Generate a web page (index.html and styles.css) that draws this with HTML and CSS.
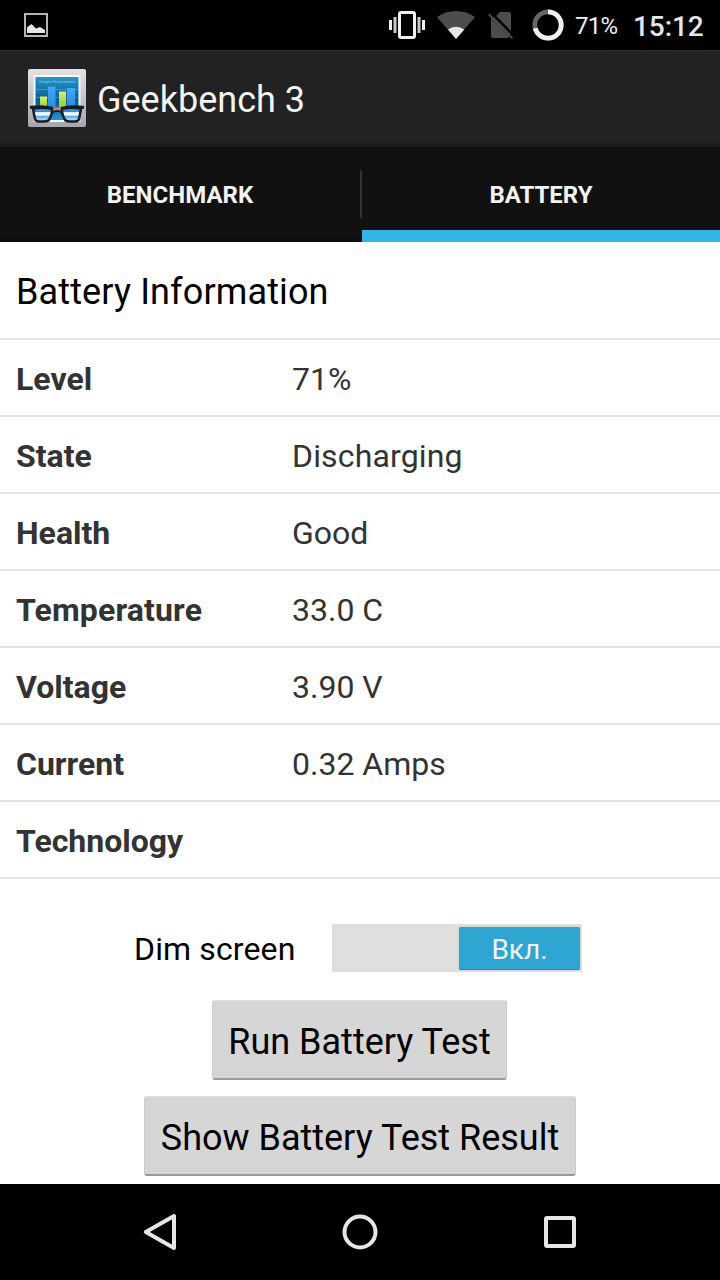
FILE: index.html
```html
<!DOCTYPE html>
<html lang="en">
<head>
<meta charset="utf-8">
<title>Geekbench 3</title>
<link rel="stylesheet" href="styles.css">
</head>
<body>
<div class="screen">
  <div class="status">
    <svg class="shot" width="24" height="24" viewBox="0 0 24 24"><rect x="1" y="1" width="22" height="22" fill="none" stroke="#b5b5b5" stroke-width="2"/><path d="M3 20V14.500L7.500 11L12 15.500L16 14L21 17V20Z" fill="#e6e6e6"/></svg>
    <svg class="vibrate" width="36" height="28" viewBox="0 0 36 28" fill="#f0f0f0"><rect x="10.500" y="1.500" width="15" height="25" rx="1.500" fill="none" stroke="#f0f0f0" stroke-width="3"/><rect x="0" y="9" width="3" height="10"/><rect x="4.500" y="6" width="3" height="16" fill="#c9c9c9"/><rect x="28.500" y="6" width="3" height="16" fill="#c9c9c9"/><rect x="33" y="9" width="3" height="10"/></svg>
    <svg class="wifi" width="38" height="28" viewBox="0 0 38 28"><path d="M0 6Q8.500 0 19 0T38 6L19 28Z" fill="#4d4d4d"/><path d="M11 18.500Q14.500 15.700 19 15.700T27.300 18.500L19 28Z" fill="#e6e6e6"/></svg>
    <svg class="sim" width="26" height="28" viewBox="0 0 26 28"><path d="M8 5L12 1H21Q23 1 23 3V20L8 5ZM3 7V25Q3 27 5 27H18Q20 27 21 26Z" fill="#4d4d4d"/><path d="M3 7L21 26L23 22L8 5Z" fill="#4d4d4d"/><path d="M3 1.500L26 25" stroke="#000" stroke-width="2.400"/><path d="M0.800 3.200L24.500 27.500" stroke="#4d4d4d" stroke-width="2"/></svg>
    <svg class="ring" width="32" height="32" viewBox="0 0 32 32" fill="none" stroke-width="4.800"><circle cx="16" cy="16" r="13.200" stroke="#666"/><circle cx="16" cy="16" r="13.200" stroke="#f0f0f0" pathLength="100" stroke-dasharray="71 29" transform="rotate(-90 16 16)"/></svg>
    <span class="percent">71%</span>
    <span class="clock">15:12</span>
  </div>
  <header class="actionbar">
    <svg width="60" height="60" viewBox="0 0 60 60">
      <defs>
        <linearGradient id="frame" x2="0" y2="1"><stop stop-color="#e2e2e5"/><stop offset="1" stop-color="#a5a6ad"/></linearGradient>
        <linearGradient id="panel" x2="0" y2="1"><stop stop-color="#2596c8"/><stop offset=".55" stop-color="#075a98"/><stop offset="1" stop-color="#2491d6"/></linearGradient>
        <linearGradient id="blue" x2="0" y2="1"><stop stop-color="#43a9f4"/><stop offset="1" stop-color="#2787dd"/></linearGradient>
        <linearGradient id="lime" x2="0" y2="1"><stop stop-color="#d9f06b"/><stop offset="1" stop-color="#7cc92b"/></linearGradient>
        <linearGradient id="lens" x2="0" y2="1"><stop stop-color="#3f9fe0"/><stop offset=".3" stop-color="#2f8bd2"/><stop offset=".35" stop-color="#eef7fd"/><stop offset=".55" stop-color="#eef7fd"/><stop offset=".6" stop-color="#4ba6e4"/><stop offset=".8" stop-color="#8ecbf0"/><stop offset="1" stop-color="#e8eef4"/></linearGradient>
      </defs>
      <rect x="1" y="1" width="58" height="58" rx="2" fill="url(#frame)"/>
      <rect x="6.500" y="7" width="47" height="47" fill="#f7f7fa"/>
      <rect x="8.500" y="9" width="43" height="43" fill="url(#panel)"/>
      <path d="M9 21.500H51M9 29.500H51" stroke="#67b7df" stroke-width=".5"/>
      <text x="12" y="14.500" textLength="36" class="mini">Integer Performance</text>
      <rect x="13" y="28.500" width="7" height="14" fill="url(#lime)"/>
      <rect x="21" y="18.500" width="7.500" height="24" fill="url(#blue)"/>
      <rect x="32" y="23.500" width="7" height="19" fill="url(#lime)"/>
      <rect x="40" y="20" width="8" height="23" fill="url(#blue)"/>
      <rect x="25" y="39.500" width="9" height="4" fill="#c28a58"/>
      <g fill="url(#lens)" stroke="#191c20" stroke-width="2.500" stroke-linejoin="round"><path d="M6 40.500Q15 39 25 40.500C25.500 44 24 48 22.500 51Q21.500 53.500 17 53.500H12Q8.500 53.500 7.800 50.500Z"/><path d="M54 40.500Q45 39 35 40.500C34.500 44 36 48 37.500 51Q38.500 53.500 43 53.500H48Q51.500 53.500 52.200 50.500Z"/></g>
      <path d="M3 39.500Q15 37.500 26 40.500M57 39.500Q45 37.500 34 40.500" fill="none" stroke="#191c20" stroke-width="3"/>
      <path d="M25 44.500Q30 41.500 35 44.500" fill="none" stroke="#191c20" stroke-width="2"/>
    </svg>
    <h1 class="title">Geekbench 3</h1>
  </header>
  <nav class="tabs">
    <div class="tab">BENCHMARK</div>
    <div class="divider"></div>
    <div class="tab active">BATTERY</div>
  </nav>
  <main class="content">
    <h2 class="heading">Battery Information</h2>
    <div class="row"><b>Level</b><span>71%</span></div>
    <div class="row"><b>State</b><span class="wide">Discharging</span></div>
    <div class="row"><b>Health</b><span>Good</span></div>
    <div class="row"><b class="wide">Temperature</b><span>33.0 C</span></div>
    <div class="row"><b>Voltage</b><span>3.90 V</span></div>
    <div class="row"><b>Current</b><span>0.32 Amps</span></div>
    <div class="row"><b>Technology</b><span></span></div>
    <div class="dim"><span class="dim-label">Dim screen</span><div class="switch"><div class="thumb">Вкл.</div></div></div>
    <div class="actions">
      <button class="btn run">Run Battery Test</button>
      <button class="btn show">Show Battery Test Result</button>
    </div>
  </main>
  <footer class="navbar">
    <svg width="40" height="40" viewBox="0 0 40 40"><path d="M5.800 20L34 4V36Z"/></svg>
    <svg width="40" height="40" viewBox="0 0 40 40"><circle cx="20" cy="20" r="15.500"/></svg>
    <svg width="40" height="40" viewBox="0 0 40 40"><rect x="6" y="6" width="28" height="28" rx="1"/></svg>
  </footer>
</div>
</body>
</html>
```

FILE: styles.css
```css
* { box-sizing: border-box; }
body { margin: 0; font-family: Roboto, "Noto Sans", sans-serif; background: #fff; }
svg { display: block; flex: none; }
.screen { width: 720px; height: 1280px; display: flex; flex-direction: column; overflow: hidden; }
.status { height: 50px; flex: none; background: #000; display: flex; align-items: center; color: #f0f0f0; white-space: nowrap; }
.shot { margin-left: 24px; }
.vibrate { margin-left: 341px; }
.wifi { margin-left: 12px; }
.sim { margin-left: 13px; }
.ring { margin-left: 17.500px; }
.percent { margin-left: 11.500px; width: 58px; font-size: 24px; padding-top: 2px; letter-spacing: -0.7px; }
.clock { font-size: 28px; font-weight: 500; padding-top: 2px; color: #e6e6e6; letter-spacing: -0.1px; }
.actionbar { height: 97px; flex: none; background: #222; border-top: 1px solid #303030; border-bottom: 4px solid #1c1c1c; display: flex; align-items: center; padding-left: 27px; padding-top: 2px; }
.mini { font: italic 4px Roboto, sans-serif; fill: #8bd2ef; }
.title { margin: 0 0 0 10px; padding-top: 4px; font-size: 36px; line-height: 42px; font-weight: 400; color: #f3f3f3; }
.tabs { height: 95px; flex: none; background: #111; display: flex; }
.tab { flex: 1; display: flex; align-items: center; justify-content: center; color: #f3f3f3; font-size: 24px; font-weight: 700; border-bottom: 4px solid #0d0d0d; padding-top: 4px; }
.tab.active { flex: 0 0 358px; border-bottom: 12px solid #33b5e5; padding-top: 12px; }
.divider { width: 2px; height: 95px; border-top: 23px solid #111; border-bottom: 24px solid #111; background: #333; }
.content { height: 942px; flex: none; background: #fff; }
.heading { margin: 0; height: 98px; border-bottom: 2px solid #e4e4e4; padding: 29px 16px 0; font-size: 36px; line-height: 42px; font-weight: 400; color: #000; letter-spacing: 0.13px; }
.row { height: 77px; display: grid; grid-template-columns: 276px 1fr; align-items: center; padding: 3px 16px 0; border-bottom: 2px solid #e4e4e4; font-size: 32px; color: #333; }
.wide { letter-spacing: 0.15px; }
.dim { display: flex; align-items: center; height: 48px; margin: 45px 0 28px 134px; }
.dim-label { width: 198px; font-size: 32px; color: #000; padding-top: 2px; letter-spacing: 0.13px; }
.switch { width: 250px; height: 48px; background: #dfdfdf; display: flex; justify-content: flex-end; padding: 3px 2px; }
.thumb { width: 121px; height: 43px; background: #2ea6d1; border-bottom: 1px solid #218eb6; border-radius: 2px; box-shadow: 0 0 1px #888; color: #f3f3f3; font-size: 28px; display: flex; align-items: center; justify-content: center; padding-top: 3px; }
.actions { display: flex; flex-direction: column; align-items: center; gap: 16px; }
.btn { height: 80px; padding: 5px 0 0; margin: 0; border: 1px solid #ccc; border-top-color: #e2e2e2; border-bottom: 2px solid #999; border-radius: 3px; background: #d6d6d6; font: 36px Roboto, "Noto Sans", sans-serif; color: #000; }
.run { width: 295px; margin-right: 1px; }
.show { width: 432px; }
.navbar { height: 96px; flex: none; background: #000; display: flex; align-items: center; justify-content: center; gap: 160px; }
.navbar svg { fill: none; stroke: #e6e6e6; stroke-width: 4; stroke-linejoin: round; }
```
